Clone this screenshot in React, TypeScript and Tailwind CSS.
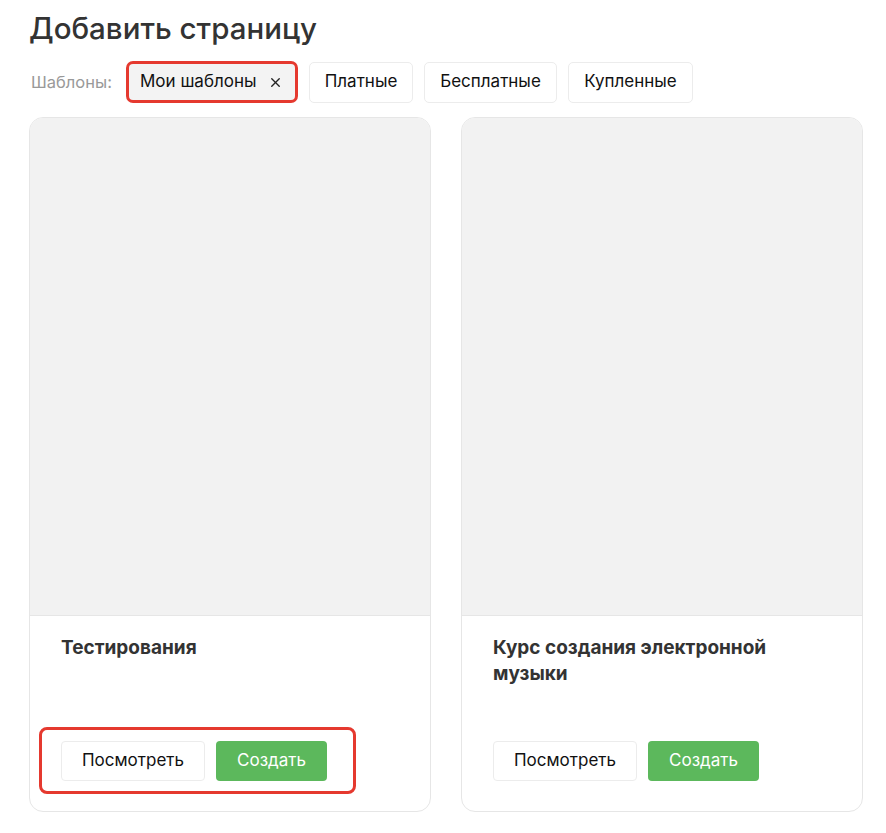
import { X } from "lucide-react";

interface Template {
  title: string;
}

interface Filter {
  label: string;
  width: string;
}

const filters: Filter[] = [
  { label: "Платные", width: "w-[104px]" },
  { label: "Бесплатные", width: "w-[133px]" },
  { label: "Купленные", width: "w-[125px]" },
];

const templates: Template[] = [
  { title: "Тестирования" },
  { title: "Курс создания электронной музыки" },
];

function TemplateCard({ template, highlighted }: { template: Template; highlighted?: boolean }) {
  return (
    <div className="flex flex-col overflow-hidden rounded-[14px] border border-[#e6e6e6] bg-white">
      <div className="h-[498px] border-b border-[#e6e6e6] bg-[#f2f2f2]" />
      <div className="flex h-[195px] flex-col px-[31px] pb-[30px] pt-[19px]">
        <h3 className="pr-10 text-[19px] font-bold leading-[26px] text-[#333]">{template.title}</h3>
        <div className="relative mt-auto flex w-fit gap-[11px]">
          {highlighted && (
            <div className="pointer-events-none absolute -bottom-[13px] -left-[22px] -right-[29px] -top-[14px] rounded-[8px] border-[3px] border-[#e5392f]" />
          )}
          <button className="h-[40px] w-[144px] rounded-[4px] border border-[#ececec] bg-white text-[17px] text-[#111]">
            Посмотреть
          </button>
          <button className="h-[40px] w-[111px] rounded-[4px] bg-[#5cb85c] text-[17px] text-white">
            Создать
          </button>
        </div>
      </div>
    </div>
  );
}

export default function App() {
  return (
    <div className="min-h-screen bg-white pt-[10px] font-['Inter',sans-serif]">
      <div className="ml-[29px] w-[834px]">
        <h1 className="text-[29.5px] font-medium leading-[36px] text-[#333]">Добавить страницу</h1>

        <div className="mt-[15px] flex items-center gap-[11px]">
          <span className="w-[86px] pl-[2px] text-[16.5px] text-[#999]">Шаблоны:</span>
          <div className="flex h-[42px] w-[172px] items-center justify-between rounded-[7px] border-[3px] border-[#e5392f] bg-[#f3f3f3] pl-[11px] pr-[12px] text-[17px] text-[#111]">
            <span>Мои шаблоны</span>
            <X size={15} strokeWidth={2.2} className="text-[#222]" />
          </div>
          {filters.map((f) => (
            <button
              key={f.label}
              className={`h-[41px] rounded-[5px] border border-[#ececec] bg-white text-[17px] text-[#111] ${f.width}`}
            >
              {f.label}
            </button>
          ))}
        </div>

        <div className="mt-[14px] grid grid-cols-2 gap-[30px]">
          {templates.map((t, i) => (
            <TemplateCard key={t.title} template={t} highlighted={i === 0} />
          ))}
        </div>
      </div>
    </div>
  );
}
